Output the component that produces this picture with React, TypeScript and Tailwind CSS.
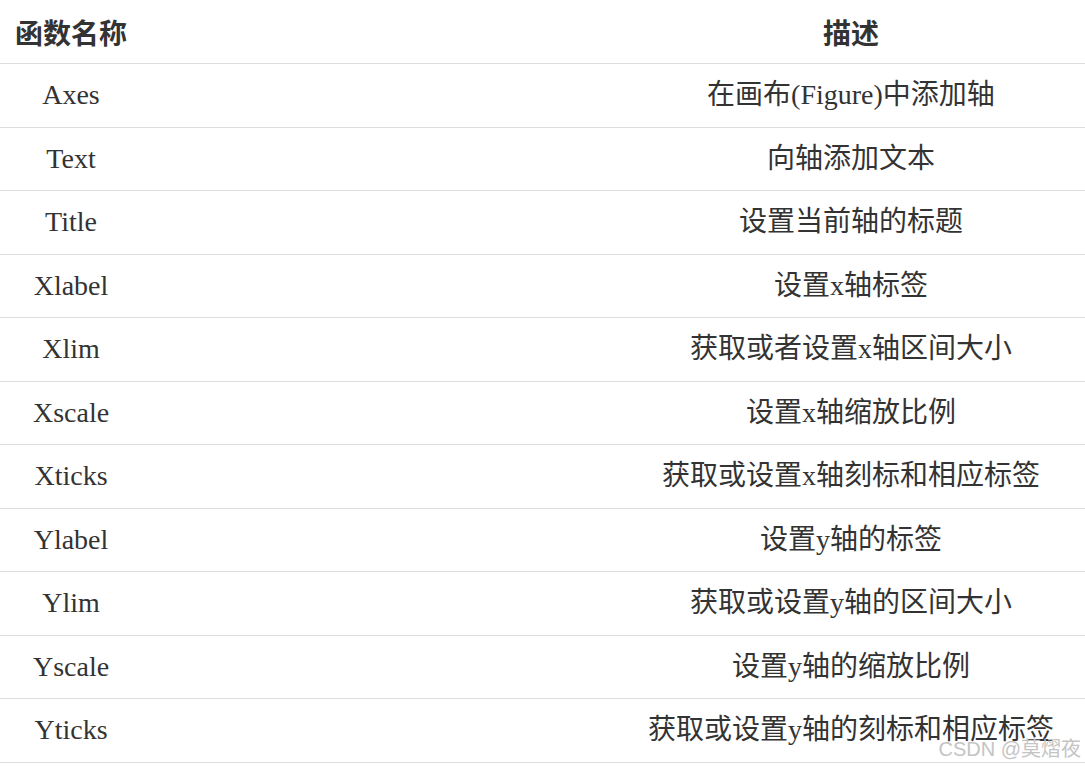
const rows: [string, string][] = [
  ['Axes', '在画布(Figure)中添加轴'],
  ['Text', '向轴添加文本'],
  ['Title', '设置当前轴的标题'],
  ['Xlabel', '设置x轴标签'],
  ['Xlim', '获取或者设置x轴区间大小'],
  ['Xscale', '设置x轴缩放比例'],
  ['Xticks', '获取或设置x轴刻标和相应标签'],
  ['Ylabel', '设置y轴的标签'],
  ['Ylim', '获取或设置y轴的区间大小'],
  ['Yscale', '设置y轴的缩放比例'],
  ['Yticks', '获取或设置y轴的刻标和相应标签'],
];

export default function App() {
  return (
    <div className="relative w-[1085px] h-[767px] overflow-hidden bg-white text-[#333] font-['Liberation_Serif','Noto_Sans_CJK_SC',serif]">
      <div className="flex h-[64px] items-center border-b border-[#dddddd] font-['Noto_Sans_CJK_SC',sans-serif] text-[28px] font-bold">
        <div className="w-[617px] pl-[15px]">函数名称</div>
        <div className="flex-1 text-center">描述</div>
      </div>
      {rows.map(([name, desc]) => (
        <div key={name} className="flex h-[63.5px] items-center border-b border-[#dddddd] text-[28px]">
          <div className="w-[142px] text-center">{name}</div>
          <div className="w-[475px]" />
          <div className="flex-1 text-center">{desc}</div>
        </div>
      ))}
      <div className="absolute right-[4px] bottom-[3px] font-['Liberation_Sans','Noto_Sans_CJK_SC',sans-serif] text-[20px] text-[#c4c4c4]">
        CSDN @莫熠夜
      </div>
    </div>
  );
}
